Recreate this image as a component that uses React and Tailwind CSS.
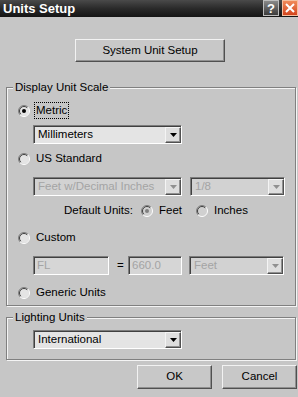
import React from "react";

function Radio({ checked, disabled }) {
  return (
    <svg width="12" height="12" viewBox="0 0 12 12" className="shrink-0">
      <circle cx="6" cy="6" r="5" fill={disabled ? "#d0d0d0" : "#e4e4e4"} />
      <path d="M9.9 2.1 A5.5 5.5 0 0 0 2.1 9.9" fill="none" stroke="#808080" strokeWidth="1" />
      <path d="M9.2 2.8 A4.5 4.5 0 0 0 2.8 9.2" fill="none" stroke="#404040" strokeWidth="1" />
      <path d="M9.9 2.1 A5.5 5.5 0 0 1 2.1 9.9" fill="none" stroke="#ffffff" strokeWidth="1" />
      {checked && <circle cx="6" cy="6" r="2" fill={disabled ? "#808080" : "#000"} />}
    </svg>
  );
}

function Arrow({ disabled }) {
  return (
    <div className="h-full w-[16px] shrink-0 flex items-center justify-center bg-[#dedede] border border-t-[#f4f4f4] border-l-[#f4f4f4] border-b-[#505050] border-r-[#505050] shadow-[inset_-1px_-1px_0_#909090]">
      <svg width="7" height="4" viewBox="0 0 7 4">
        <polygon points="0,0 7,0 3.5,4" fill={disabled ? "#909090" : "#000"} />
      </svg>
    </div>
  );
}

function Dropdown({ text, disabled, className }) {
  return (
    <div
      className={
        "h-[19px] flex items-stretch border border-t-[#7c7c7c] border-l-[#7c7c7c] border-b-white border-r-white shadow-[inset_1px_1px_0_#404040] pl-[1px] pt-[1px] " +
        (disabled ? "bg-[#d2d2d2] " : "bg-[#e4e4e4] ") +
        className
      }
    >
      <div className={"flex-1 flex items-center pl-[3px] leading-none " + (disabled ? "text-[#a4a4a4]" : "text-black")}>
        {text}
      </div>
      <Arrow disabled={disabled} />
    </div>
  );
}

function Field({ text, className }) {
  return (
    <div
      className={
        "h-[19px] flex items-center pl-[3px] border border-t-[#7c7c7c] border-l-[#7c7c7c] border-b-white border-r-white shadow-[inset_1px_1px_0_#404040] bg-[#d6d6d6] text-[#a4a4a4] leading-none " +
        className
      }
    >
      {text}
    </div>
  );
}

function Button({ children, className }) {
  return (
    <div
      className={
        "flex items-center justify-center bg-[#c8c8c8] border border-t-[#f2f2f2] border-l-[#f2f2f2] border-b-[#505050] border-r-[#505050] shadow-[inset_-1px_-1px_0_#909090] " +
        className
      }
    >
      {children}
    </div>
  );
}

function Group({ label, className, children }) {
  return (
    <div
      className={
        "relative ml-[6px] w-[290px] border border-[#808080] shadow-[inset_1px_1px_0_#f4f4f4,1px_1px_0_#f4f4f4] " +
        className
      }
    >
      <div className="absolute top-[-8px] left-[6px] px-[2px] bg-[#c6c6c6] leading-[14px]">{label}</div>
      {children}
    </div>
  );
}

export default function App() {
  return (
    <div className="w-[298px] h-[397px] bg-[#c6c6c6] font-['Liberation_Sans',Arial,sans-serif] text-[11.5px] text-black flex flex-col overflow-hidden">
      <div className="h-[17px] shrink-0 flex items-center justify-between bg-gradient-to-b from-[#4a4a4a] via-[#2a2a2a] to-[#141414]">
        <div className="pl-[3px] text-white font-bold text-[13px] leading-none">Units Setup</div>
        <div className="flex h-full items-start gap-[3px] pr-0">
          <div className="w-[16px] h-[16px] flex items-center justify-center bg-gradient-to-b from-[#8a8a8a] to-[#3c3c3c] border border-[#bdbdbd] text-white font-bold text-[13px] leading-none">
            ?
          </div>
          <div className="w-[16px] h-[16px] flex items-center justify-center bg-gradient-to-b from-[#f08a5a] to-[#d2441c] border border-[#f5c0a0]">
            <svg width="10" height="10" viewBox="0 0 10 10">
              <path d="M1 1 L9 9 M9 1 L1 9" stroke="#fff" strokeWidth="2" />
            </svg>
          </div>
        </div>
      </div>

      <Button className="mt-[22px] ml-[75px] w-[150px] h-[23px] shrink-0">System Unit Setup</Button>

      <Group label="Display Unit Scale" className="mt-[25px] h-[219px] shrink-0 pt-[14px]">
        <div className="h-[17px] flex items-center pl-[11px]">
          <Radio checked />
          <span className="ml-[4px] px-[1px] h-[17px] flex items-center border border-dotted border-black">Metric</span>
        </div>
        <Dropdown text="Millimeters" className="mt-[6px] ml-[26px] w-[149px]" />
        <div className="mt-[6px] h-[17px] flex items-center pl-[11px]">
          <Radio />
          <span className="ml-[6px]">US Standard</span>
        </div>
        <div className="mt-[10px] ml-[26px] flex gap-[8px]">
          <Dropdown text="Feet w/Decimal Inches" disabled className="w-[149px]" />
          <Dropdown text="1/8" disabled className="w-[95px]" />
        </div>
        <div className="mt-[6px] h-[17px] flex items-center">
          <span className="w-[126px] text-right">Default Units:</span>
          <span className="ml-[8px]"><Radio checked disabled /></span>
          <span className="ml-[6px]">Feet</span>
          <span className="ml-[14px]"><Radio disabled /></span>
          <span className="ml-[6px]">Inches</span>
        </div>
        <div className="mt-[10px] h-[17px] flex items-center pl-[11px]">
          <Radio />
          <span className="ml-[6px]">Custom</span>
        </div>
        <div className="mt-[10px] ml-[26px] flex items-center">
          <Field text="FL" className="w-[76px]" />
          <span className="ml-[8px] w-[11px]">=</span>
          <Field text="660.0" className="w-[54px]" />
          <Dropdown text="Feet" disabled className="ml-[7px] w-[95px]" />
        </div>
        <div className="mt-[9px] h-[17px] flex items-center pl-[11px]">
          <Radio />
          <span className="ml-[6px]">Generic Units</span>
        </div>
      </Group>

      <Group label="Lighting Units" className="mt-[11px] h-[43px] shrink-0 pt-[12px]">
        <Dropdown text="International" className="ml-[26px] w-[149px]" />
      </Group>

      <div className="mt-[5px] flex gap-[10px] pl-[137px]">
        <Button className="w-[75px] h-[24px]">OK</Button>
        <Button className="w-[75px] h-[24px]">Cancel</Button>
      </div>
    </div>
  );
}
